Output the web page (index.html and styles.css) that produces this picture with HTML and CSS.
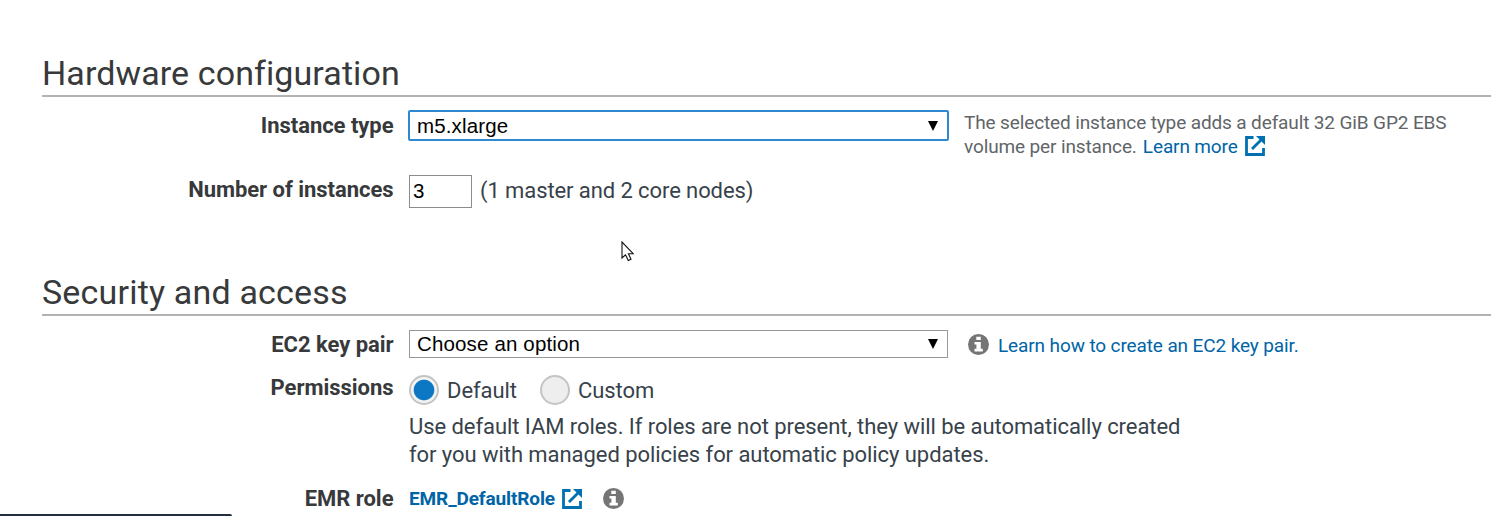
FILE: index.html
```html
<!DOCTYPE html>
<html lang="en">
<head>
<meta charset="utf-8">
<title>Create Cluster</title>
<link rel="stylesheet" href="styles.css">
</head>
<body>
<svg class="defs" aria-hidden="true">
  <symbol id="external" viewBox="0 0 20 20">
    <path d="M8.5 1.5H1.5V18.5H18.5V12" fill="none" stroke="currentColor" stroke-width="2.8"/>
    <path d="M7 13L17 3" fill="none" stroke="currentColor" stroke-width="2.8"/>
    <path d="M11 0H20V9Z" fill="currentColor"/>
  </symbol>
  <symbol id="info" viewBox="0 0 21 21">
    <circle cx="10.5" cy="10.5" r="10.5" fill="#757575"/>
    <path d="M8.3 2.7h4.5v3.4H8.3zM6.5 7.9h6.3v6.9h2v2.6H6.5v-2.6h1.9v-4.2H6.5z" fill="#fff"/>
  </symbol>
</svg>
<main class="page">
  <section class="section">
    <h2 class="title title-hardware">Hardware configuration</h2>
    <div class="row row-type">
      <span class="label">Instance type</span>
      <div class="select focused"><span>m5.xlarge</span><svg class="arrow" viewBox="0 0 10 10"><path d="M0 0H10L5 10Z"/></svg></div>
      <p class="hint">The selected instance type adds a default 32 GiB GP2 EBS<br>volume per instance. <a class="link more-link">Learn more</a><svg class="external"><use href="#external"/></svg></p>
    </div>
    <div class="row row-count">
      <span class="label">Number of instances</span>
      <div class="number">3</div>
      <span class="text count-note">(1 master and 2 core nodes)</span>
    </div>
  </section>
  <section class="section security">
    <h2 class="title">Security and access</h2>
    <div class="row row-key">
      <span class="label">EC2 key pair</span>
      <div class="select"><span>Choose an option</span><svg class="arrow" viewBox="0 0 10 10"><path d="M0 0H10L5 10Z"/></svg></div>
      <svg class="info"><use href="#info"/></svg>
      <a class="link key-link">Learn how to create an EC2 key pair.</a>
    </div>
    <div class="row row-permissions">
      <span class="label">Permissions</span>
      <div class="permissions">
        <div class="radios">
          <span class="radio checked"></span><span class="text">Default</span>
          <span class="radio custom"></span><span class="text">Custom</span>
        </div>
        <p class="text description">Use default IAM roles. If roles are not present, they will be automatically created<br>for you with managed policies for automatic policy updates.</p>
      </div>
    </div>
    <div class="row row-role">
      <span class="label">EMR role</span>
      <a class="link role-link">EMR_DefaultRole</a><svg class="external"><use href="#external"/></svg>
      <svg class="info"><use href="#info"/></svg>
    </div>
  </section>
</main>
<svg class="cursor" viewBox="0 0 13 21"><path d="M1 1V17L4.5 13.8L7.3 19.5L10 18.2L7.4 12.7H12.2Z" fill="#fff" stroke="#111" stroke-width="1.1"/></svg>
<div class="status-bar"></div>
</body>
</html>
```
FILE: styles.css
```css
* { box-sizing: border-box; }
body {
  position: relative;
  margin: 0;
  height: 516px;
  overflow: hidden;
  background: #fff;
  color: #37424a;
  font: 22px/28px Roboto, "Liberation Sans", sans-serif;
}
p, h2 { margin: 0; }
.defs { display: none; }
.page { padding: 48px 0 0 42px; }
.title {
  height: 49px;
  border-bottom: 2px solid #b3b3b3;
  color: #37393b;
  font-size: 34px;
  font-weight: 400;
  line-height: 50px;
  letter-spacing: 0.18px;
  white-space: nowrap;
}
.title-hardware { letter-spacing: 0.1px; }
.security { margin-top: 59px; }
.row { display: flex; align-items: flex-start; white-space: nowrap; }
.label {
  flex: none;
  width: 352px;
  margin-right: 15px;
  padding-right: 0.5px;
  color: #37393b;
  font-weight: 700;
  letter-spacing: -0.04px;
  text-align: right;
}
.text { letter-spacing: -0.06px; }
.row-type { height: 78px; padding-top: 13px; }
.row-type .label { padding-top: 2px; }
.select {
  display: flex;
  flex: none;
  align-items: center;
  justify-content: space-between;
  width: 539px;
  height: 28px;
  padding: 0 9px 0 7px;
  border: 1px solid #999;
  color: #000;
  font: 20.5px/26px "Liberation Sans", Arial, sans-serif;
  letter-spacing: 0.15px;
}
.select.focused {
  width: 541px;
  height: 31px;
  margin-left: -1px;
  border: 2px solid #3088d0;
  border-radius: 2px;
}
.arrow { width: 10px; height: 10px; }
.hint {
  margin-left: 15px;
  padding-top: 1px;
  color: #5f6568;
  font-size: 19px;
  letter-spacing: -0.13px;
  line-height: 24px;
}
.link { color: #0064a6; text-decoration: none; }
.more-link { margin-left: 1.5px; }
.external { width: 20px; height: 20px; margin-left: 7px; color: #0070b3; vertical-align: -3px; }
.row-count { height: 33px; }
.number {
  width: 63px;
  height: 33px;
  margin: 0 8px 0 0;
  padding-left: 3px;
  border: 1px solid #8c8c8c;
  color: #000;
  font: 20.5px/29px "Liberation Sans", Arial, sans-serif;
}
.row-count .label { padding-top: 1px; }
.count-note { padding-top: 2px; letter-spacing: -0.09px; }
.row-key { height: 59px; padding-top: 14px; }
.row-key .label { padding-top: 1px; }
.info { width: 21px; height: 21px; }
.row-key .info { margin: 3.5px 9.5px 0 19.5px; }
.key-link { padding-top: 2px; font-size: 19px; letter-spacing: -0.12px; }
.row-permissions { height: 109px; }
.row-permissions .label { margin-top: -1px; }
.radios { display: flex; align-items: center; height: 30px; }
.radios .text { padding-top: 2px; }
.radio {
  display: block;
  width: 30px;
  height: 30px;
  margin-right: 8px;
  border: 2px solid #c4c4c4;
  border-radius: 50%;
  background: #eee;
}
.checked { background: radial-gradient(circle, #0c78c4 9.8px, #f3f3f3 10.8px); }
.custom { margin-left: 23px; }
.description { padding-top: 8px; }
.row-role .label { padding-top: 1px; }
.role-link { padding-top: 1px; font-size: 19px; font-weight: 700; letter-spacing: -0.12px; }
.row-role .external { margin: 5px 0 0 6.5px; }
.row-role .info { margin: 4px 0 0 21px; }
.cursor { position: absolute; left: 620.5px; top: 241px; width: 13px; height: 21px; }
.status-bar {
  position: absolute;
  bottom: 0;
  left: 0;
  width: 232px;
  height: 2px;
  border-radius: 0 2px 0 0;
  background: #232f3e;
}
```
